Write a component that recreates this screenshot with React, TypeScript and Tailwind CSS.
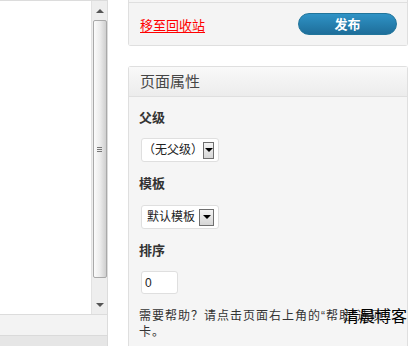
const font = "font-['Liberation_Sans','Noto_Sans_CJK_SC',sans-serif]";

function Arrow({ up }: { up?: boolean }) {
  return (
    <div
      className={
        up
          ? "w-0 h-0 border-x-[4px] border-x-transparent border-b-[4px] border-b-[#555]"
          : "w-0 h-0 border-x-[4px] border-x-transparent border-t-[4px] border-t-[#555]"
      }
    />
  );
}

function Scrollbar() {
  return (
    <div className="w-[16px] h-full bg-[#eeeeee] border-l border-[#e2e2e2] flex flex-col items-center">
      <div className="h-[19px] flex items-center justify-center">
        <Arrow up />
      </div>
      <div className="w-[14px] h-[258px] rounded-[2px] border border-[#a9a9a9] bg-gradient-to-r from-[#fbfbfb] via-[#ececec] to-[#cfcfcf] flex flex-col items-center justify-center gap-[1px]">
        <div className="w-[5px] h-px bg-[#777]" />
        <div className="w-[5px] h-px bg-[#777]" />
        <div className="w-[5px] h-px bg-[#777]" />
      </div>
      <div className="flex-1" />
      <div className="h-[18px] flex items-center justify-center">
        <Arrow />
      </div>
    </div>
  );
}

function SelectBox({ label, indent }: { label: string; indent: string }) {
  return (
    <div className="ml-[2px] w-[78px] h-[24px] bg-white border border-[#dfdfdf] rounded-[3px] flex items-center justify-between pr-[4px]">
      <span className={`${indent} text-[12px] leading-none text-[#222] whitespace-nowrap`}>{label}</span>
      <div className="w-[15px] h-[17px] border border-[#6f6f6f] bg-gradient-to-b from-[#f4f4f4] to-[#d6d6d6] flex items-center justify-center">
        <div className="w-0 h-0 border-x-[4px] border-x-transparent border-t-[4px] border-t-black" />
      </div>
    </div>
  );
}

export default function App() {
  return (
    <div className={`relative flex w-[411px] h-[346px] bg-white overflow-hidden ${font}`}>
      <div className="w-[108px] shrink-0 flex flex-col">
        <div className="h-[315px] border-y border-r border-[#dcdcdc] flex justify-end">
          <Scrollbar />
        </div>
        <div className="h-[20px] bg-[#f3f3f3] border-r border-[#dcdcdc]" />
        <div className="flex-1 bg-[#e6e6e6] border-t border-r border-[#dadada]" />
      </div>

      <div className="ml-[20px] w-[280px] shrink-0 flex flex-col">
        <div className="-mt-[10px] border-x border-b border-[#dfdfdf] rounded-b-[3px] bg-[#f5f5f5]">
          <div className="h-[13px] border-b border-[#dfdfdf]" />
          <div className="h-[42px] pl-[11px] pr-[10px] flex items-center justify-between bg-[#f4f4f4]">
            <a className="mt-[2px] text-[13px] text-[#ff0000] underline underline-offset-2 leading-none">移至回收站</a>
            <button className="w-[99px] h-[22px] rounded-full border border-[#21759b] bg-gradient-to-b from-[#2f93c6] to-[#1e6e9a] text-white text-[13px] font-bold leading-none">
              发布
            </button>
          </div>
        </div>

        <div className="mt-[20px] flex-1 border-x border-t border-[#dfdfdf] rounded-t-[3px] bg-[#f5f5f5] flex flex-col">
          <div className="h-[30px] border-b border-[#dfdfdf] bg-gradient-to-b from-[#f9f9f9] to-[#ececec] pl-[11px] flex items-center">
            <h3 className="text-[15px] text-[#464646] leading-none">页面属性</h3>
          </div>
          <div className="pl-[10px] pr-[10px] pt-[13px] flex flex-col text-[#333]">
            <p className="text-[13px] font-bold leading-[16px]">父级</p>
            <div className="mt-[12px]">
              <SelectBox label="（无父级）" indent="pl-[1px]" />
            </div>
            <p className="mt-[14px] text-[13px] font-bold leading-[16px]">模板</p>
            <div className="mt-[13px]">
              <SelectBox label="默认模板" indent="pl-[5px]" />
            </div>
            <p className="mt-[14px] text-[13px] font-bold leading-[16px]">排序</p>
            <div className="mt-[12px] ml-[2px] w-[37px] h-[23px] bg-white border border-[#dfdfdf] rounded-[3px] flex items-center pl-[3px]">
              <span className="text-[12px] leading-none text-[#222]">0</span>
            </div>
            <p className="mt-[14px] max-w-[256px] text-[12px] leading-[16px] tracking-[1px] text-[#333]">
              需要帮助？请点击页面右上角的“帮助”选项卡。
            </p>
          </div>
        </div>
      </div>

      <div className="absolute left-[343px] top-[307px] text-[16px] leading-[20px] text-black whitespace-nowrap">
        清晨博客
      </div>
    </div>
  );
}
